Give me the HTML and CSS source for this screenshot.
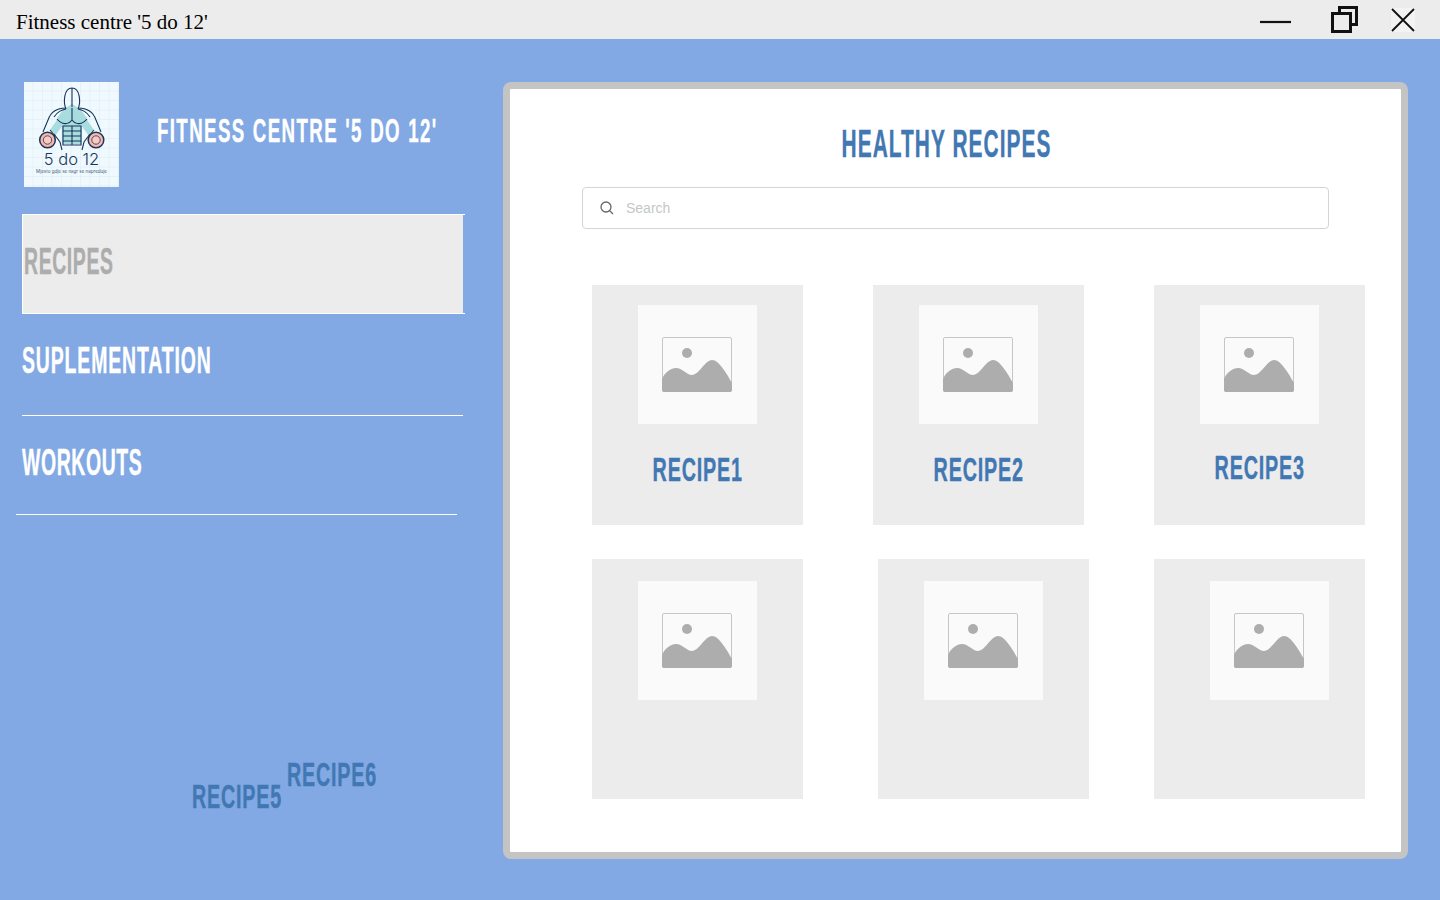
FILE: index.html
```html
<!DOCTYPE html>
<html lang="en">
<head>
<meta charset="utf-8">
<title>Fitness centre '5 do 12'</title>
<link rel="stylesheet" href="styles.css">
</head>
<body>
<svg class="defs" width="0" height="0" aria-hidden="true">
  <symbol id="ph" viewBox="0 0 70 55">
    <rect x=".5" y=".5" width="69" height="54" rx="1.500" fill="#fafafa" stroke="#c6c6c6"/>
    <circle cx="25" cy="16" r="5" fill="#adadad"/>
    <path d="M0 42C3 35 9 31 14 31C20 31 25 38 30 38C37 38 43 23 50 23C57 23 65 37 70 46V53Q70 55 68 55H2Q0 55 0 53Z" fill="#adadad"/>
  </symbol>
</svg>
<header class="titlebar">
  <span class="app-title">Fitness centre '5 do 12'</span>
  <div class="win-controls">
    <svg class="win-min" width="31" height="4" viewBox="0 0 31 4"><path d="M0 2H31" stroke="#111" stroke-width="2.200"/></svg>
    <svg class="win-max" width="28" height="28" viewBox="0 0 28 28"><path d="M8.500 7V2.500H25.500V19.500H20" fill="none" stroke="#111" stroke-width="3"/><rect x="1.500" y="8.500" width="18" height="18" fill="none" stroke="#111" stroke-width="3"/></svg>
    <svg class="win-close" width="24" height="24" viewBox="0 0 24 24"><rect width="24" height="24" fill="#f3f3f3"/><path d="M1 1L23 23M23 1L1 23" stroke="#111" stroke-width="1.800"/></svg>
  </div>
</header>
<main class="desktop">
  <aside class="sidebar">
    <div class="brand">
      <svg class="logo" width="95" height="105" viewBox="0 0 95 105">
        <defs>
          <pattern id="grid" width="9.500" height="9.500" patternUnits="userSpaceOnUse"><path d="M9.500 0V9.500H0" fill="none" stroke="#d6e7f1" stroke-width=".7"/></pattern>
        </defs>
        <rect width="95" height="105" fill="#eff9fe"/>
        <rect width="95" height="105" fill="url(#grid)"/>
        <path d="M40 27L48 22L56 27L63 36L58 41V62H38V41L33 36Z" fill="#a8dcdf"/>
        <path d="M26 48L35 35L39 43L31 54ZM70 48L61 35L57 43L65 54Z" fill="#a8dcdf"/>
        <g fill="none" stroke="#19365a" stroke-width="1.100">
          <path d="M42 27C39 20 40 6 48 6C56 6 57 20 54 27M48 6V25"/>
          <path d="M42 26C33 26 27 29 24 38L19 50M54 26C63 26 69 29 72 38L77 50"/>
          <path d="M30 35C34 29 38 28 42 27M66 35C62 29 58 28 54 27"/>
          <path d="M33 37C38 43 44 43 48 38C52 43 58 43 63 37M48 26V38"/>
          <path d="M39 44H57V63H39ZM39 49H57M39 54H57M39 59H57M48 44V63"/>
          <path d="M30 52L36 60L38 68M66 52L60 60L58 68"/>
          <path d="M26 48L31 54M70 48L65 54"/>
        </g>
        <circle cx="23.500" cy="58" r="7.800" fill="#f9b8ad" stroke="#19365a" stroke-width="1.500"/>
        <circle cx="23.500" cy="58" r="4.200" fill="#fbc9c0" stroke="#19365a" stroke-width=".8"/>
        <circle cx="72" cy="58" r="7.800" fill="#f9b8ad" stroke="#19365a" stroke-width="1.500"/>
        <circle cx="72" cy="58" r="4.200" fill="#fbc9c0" stroke="#19365a" stroke-width=".8"/>
        <text class="logo-name" x="47.500" y="83" text-anchor="middle">5 do 12</text>
        <text class="logo-tag" x="47.500" y="90.500" text-anchor="middle">Mjesto gdje se nagr se napreduje</text>
      </svg>
      <h1 class="brand-name">FITNESS CENTRE '5 DO 12'</h1>
    </div>
    <nav class="nav">
      <a class="nav-item nav-active"><span>RECIPES</span></a>
      <a class="nav-item nav-middle"><span>SUPLEMENTATION</span></a>
      <a class="nav-item nav-last"><span>WORKOUTS</span></a>
    </nav>
    <span class="stray stray-5">RECIPE5</span>
    <span class="stray stray-6">RECIPE6</span>
  </aside>
  <section class="panel">
    <h2 class="panel-title">HEALTHY RECIPES</h2>
    <label class="search">
      <svg width="16" height="16" viewBox="0 0 16 16"><circle cx="7" cy="7" r="5" fill="none" stroke="#666" stroke-width="1.300"/><path d="M10.500 10.500L14 14" stroke="#666" stroke-width="1.300"/></svg>
      <span>Search</span>
    </label>
    <div class="row row-one">
      <article class="card"><svg class="thumb"><use href="#ph" x="24" y="32" width="70" height="55"/></svg><h3>RECIPE1</h3></article>
      <article class="card"><svg class="thumb"><use href="#ph" x="24" y="32" width="70" height="55"/></svg><h3>RECIPE2</h3></article>
      <article class="card"><svg class="thumb"><use href="#ph" x="24" y="32" width="70" height="55"/></svg><h3 class="label-up">RECIPE3</h3></article>
    </div>
    <div class="row row-two">
      <article class="card"><svg class="thumb"><use href="#ph" x="24" y="32" width="70" height="55"/></svg></article>
      <article class="card card-shift"><svg class="thumb"><use href="#ph" x="24" y="32" width="70" height="55"/></svg></article>
      <article class="card"><svg class="thumb thumb-shift"><use href="#ph" x="24" y="32" width="70" height="55"/></svg></article>
    </div>
  </section>
</main>
</body>
</html>
```
FILE: styles.css
```css
* { box-sizing: border-box; }
html, body { margin: 0; height: 100%; }
body {
  width: 1440px;
  height: 900px;
  overflow: hidden;
  background: #82a9e4;
  display: flex;
  flex-direction: column;
  font-family: "Liberation Sans", sans-serif;
}
.defs { position: absolute; }

.titlebar {
  height: 39px;
  flex: none;
  background: #ececec;
  display: flex;
  align-items: center;
  justify-content: space-between;
  padding: 0 25px 0 16px;
}
.app-title {
  font: 21px "Liberation Serif", serif;
  color: #000;
  margin-top: 5px;
}
.win-controls { display: flex; align-items: flex-start; height: 39px; }
.win-controls svg { display: block; }
.win-min { margin-top: 20px; margin-right: 40px; }
.win-max { margin-top: 5px; margin-right: 32px; }
.win-close { margin-top: 8px; }

.desktop {
  flex: 1;
  display: flex;
  padding: 43px 32px 41px 16px;
}
.sidebar { position: relative; width: 487px; flex: none; }
.brand { display: flex; align-items: flex-start; padding-left: 8px; }
.logo { display: block; flex: none; }
.brand-name, .nav-item span, .panel-title, .card h3, .stray {
  font-family: "Liberation Sans", sans-serif;
  font-weight: 700;
  display: inline-block;
  white-space: nowrap;
  margin: 0;
  transform-origin: 0 50%;
  -webkit-text-stroke: .4px currentColor;
}
.brand-name {
  color: #fff;
  font-size: 34px;
  line-height: 40px;
  letter-spacing: 2.500px;
  word-spacing: 1.300px;
  margin: 28px 0 0 38px;
  transform: scaleX(.55);
}
.nav { margin-top: 27px; display: flex; flex-direction: column; }
.nav-item {
  display: block;
  width: 441px;
  margin-left: 6px;
  border-bottom: 1px solid #fff;
  color: #fff;
  font-size: 36px;
  line-height: 40px;
  padding-top: 27px;
}
.nav-item span { transform: scaleX(.54); letter-spacing: 1.100px; }
.nav-active {
  width: 443px;
  height: 100px;
  background: linear-gradient(#ececec, #ececec) no-repeat 0 0 / 440px 100%;
  color: #adadad;
  padding-left: 1px;
  border-top: 1px solid #fff;
  border-left: 1px solid #fff;
}
.nav-middle { height: 102px; }
.nav-middle span { letter-spacing: 1.600px; }
.nav-last { height: 99px; margin-left: 0; padding-left: 6px; }
.stray {
  position: absolute;
  color: #4178b3;
  font-size: 34px;
  line-height: 40px;
  letter-spacing: 1.400px;
  transform: scaleX(.58);
}
.stray-5 { left: 176px; top: 694px; }
.stray-6 { left: 271px; top: 672px; }

.panel {
  width: 905px;
  height: 777px;
  background: #fff;
  border: 7px solid #c4c4c4;
  border-radius: 8px;
  padding: 33px 36px 0 72px;
}
.panel-title {
  display: block;
  color: #4178b3;
  font-size: 38px;
  line-height: 44px;
  letter-spacing: 1.870px;
  text-align: center;
  width: 727px;
  margin-left: 1px;
  transform-origin: 50% 50%;
  transform: scaleX(.55);
}
.search {
  display: flex;
  align-items: center;
  gap: 11px;
  width: 747px;
  height: 42px;
  margin-top: 21px;
  padding-left: 16px;
  border: 1px solid #d2d4d6;
  border-radius: 4px;
  font: 14px "Liberation Sans", sans-serif;
  color: #c3c7ca;
}
.row { display: flex; margin-left: 10px; }
.row-one { gap: 70px; margin-top: 56px; }
.row-two { justify-content: space-between; width: 773px; margin-top: 34px; }
.card {
  width: 211px;
  height: 240px;
  background: #ececec;
  padding-top: 20px;
  text-align: center;
}
.row-two .card { padding-top: 22px; }
.card-shift { margin-left: 5px; margin-right: -5px; }
.thumb { display: block; width: 119px; height: 119px; margin: 0 auto; background: #fafafa; }
.thumb-shift { margin-left: 56px; }
.card h3 {
  color: #4178b3;
  font-size: 34px;
  line-height: 40px;
  letter-spacing: 1.400px;
  margin-top: 25px;
  transform-origin: 50% 50%;
  transform: scaleX(.58);
}
.card h3.label-up { margin-top: 23px; }
.logo-name { font: 300 16.500px "Inter", "Liberation Sans", sans-serif; fill: #19365a; }
.logo-tag { font: 4.500px "Inter", "Liberation Sans", sans-serif; fill: #44597a; }
```
